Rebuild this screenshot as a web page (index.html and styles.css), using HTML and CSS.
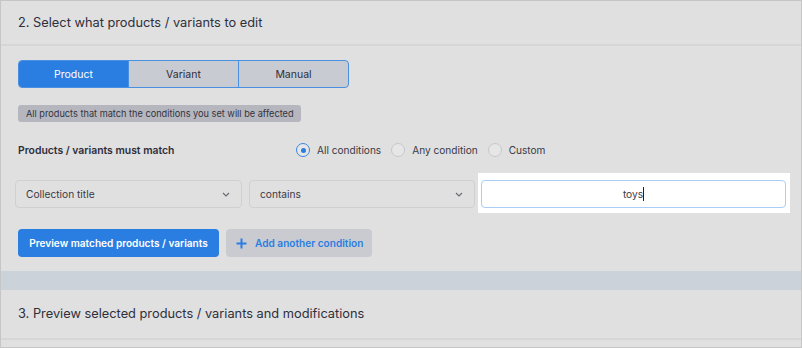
FILE: index.html
```html
<!DOCTYPE html>
<html lang="en">

<head>
  <meta charset="UTF-8">
  <meta name="viewport" content="width=device-width, initial-scale=1.0">
  <title>Bulk edit</title>
  <link rel="stylesheet" href="styles.css">
</head>

<body>
  <div class="panel">
    <div class="section-head">2. Select what products / variants to edit</div>

    <div class="section-body">
      <div class="tabs">
        <div class="tab active">Product</div>
        <div class="tab">Variant</div>
        <div class="tab">Manual</div>
      </div>

      <div class="note">All products that match the conditions you set will be affected</div>

      <div class="match">
        <div class="match-label">Products / variants must match</div>
        <div class="radios">
          <label class="radio checked"><span class="dot"></span>All conditions</label>
          <label class="radio"><span class="dot"></span>Any condition</label>
          <label class="radio"><span class="dot"></span>Custom</label>
        </div>
      </div>

      <div class="condition">
        <div class="select first">
          <span>Collection title</span>
          <svg class="chevron" width="8" height="5" viewBox="0 0 8 5"><path d="M1 1l3 3 3-3" fill="none" stroke="#6b6b73" stroke-width="1.2"/></svg>
        </div>
        <div class="select">
          <span>contains</span>
          <svg class="chevron" width="8" height="5" viewBox="0 0 8 5"><path d="M1 1l3 3 3-3" fill="none" stroke="#6b6b73" stroke-width="1.2"/></svg>
        </div>
        <div class="value-wrap">
          <div class="value">toys<span class="caret"></span></div>
        </div>
      </div>

      <div class="actions">
        <button class="btn primary">Preview matched products / variants</button>
        <button class="btn secondary">
          <svg width="11" height="11" viewBox="0 0 11 11"><path d="M5.5 0.5v10M0.5 5.5h10" stroke="#2a7de1" stroke-width="2"/></svg>
          Add another condition
        </button>
      </div>
    </div>

    <div class="band"></div>

    <div class="section-head tall">3. Preview selected products / variants and modifications</div>
    <div class="rest"></div>
  </div>
</body>

</html>
```

FILE: styles.css
```css
* {
  margin: 0;
  padding: 0;
  box-sizing: border-box;
  font-family: Inter, "Noto Sans", Arial, sans-serif;
}

body {
  background: #e0e0e0;
  color: #2e2e3a;
}

.panel {
  width: 802px;
  height: 348px;
  border: 1px solid #c6c6c6;
  background: #e0e0e0;
}

.section-head {
  height: 45px;
  padding: 0 17px;
  display: flex;
  align-items: center;
  font-size: 12.8px;
  color: #2f2f3b;
  border-bottom: 2px solid #d6d6d6;
}

.section-head.tall {
  height: 50px;
  padding-bottom: 2px;
}

.section-body {
  padding: 14px 17px 14px;
}

.tabs {
  display: flex;
  width: 331px;
  height: 28px;
  border: 1px solid #4a90e2;
  border-radius: 4px;
  overflow: hidden;
  background: #c9cbd2;
}

.tab {
  flex: 1;
  display: flex;
  align-items: center;
  justify-content: center;
  font-size: 10.5px;
  color: #2e2e3a;
  border-left: 1px solid #4a90e2;
}

.tab:first-child {
  border-left: 0;
}

.tab.active {
  background: #2a7de1;
  color: #fff;
}

.note {
  display: inline-block;
  margin-top: 17px;
  height: 17px;
  line-height: 17px;
  padding: 0 7px 0 8px;
  border-radius: 3px;
  background: #b6b7be;
  font-size: 9.2px;
  color: #33333f;
}

.match {
  display: flex;
  align-items: center;
  height: 20px;
  margin-top: 18px;
}

.match-label {
  width: 278px;
  font-size: 10.4px;
  font-weight: 600;
}

.radios {
  display: flex;
  gap: 10px;
}

.radio {
  display: flex;
  align-items: center;
  gap: 7px;
  font-size: 10.1px;
  color: #3a3a46;
}

.dot {
  width: 14px;
  height: 14px;
  border-radius: 50%;
  border: 1px solid #c8c8cc;
  background: #e6e6e6;
  display: flex;
  align-items: center;
  justify-content: center;
}

.radio.checked .dot {
  border-color: #3b86e0;
}

.radio.checked .dot::after {
  content: '';
  width: 5px;
  height: 5px;
  border-radius: 50%;
  background: #2a7de1;
}

.condition {
  display: flex;
  align-items: flex-start;
  margin: 20px 0 0 -3px;
  height: 28px;
}

.select {
  flex-shrink: 0;
  width: 226px;
  height: 28px;
  margin-right: 7px;
  padding: 0 11px 0 10px;
  display: flex;
  align-items: center;
  justify-content: space-between;
  border: 1px solid #d0d0d2;
  border-radius: 4px;
  font-size: 10.2px;
  color: #3a3a46;
}

.select.first {
  width: 227px;
}

.select:nth-child(2) {
  margin-right: 3px;
}

.value-wrap {
  flex-shrink: 0;
  margin-top: -7px;
  padding: 7px 4px 5px 3px;
  background: #fff;
}

.value {
  width: 305px;
  height: 28px;
  border: 1px solid #a9cdf6;
  border-radius: 4px;
  display: flex;
  align-items: center;
  justify-content: center;
  font-size: 10.2px;
  color: #3a3a46;
}

.caret {
  display: inline-block;
  width: 1px;
  height: 14px;
  background: #222;
}

.actions {
  display: flex;
  gap: 7px;
  margin-top: 21px;
}

.btn {
  height: 28px;
  border: 0;
  border-radius: 4px;
  font-size: 10.1px;
  font-weight: 600;
  display: flex;
  align-items: center;
}

.btn.primary {
  width: 201px;
  justify-content: center;
  background: #2a7de1;
  color: #fff;
}

.btn.secondary {
  width: 146px;
  padding-left: 10px;
  gap: 8px;
  background: #c9cbd1;
  color: #2a7de1;
}

.band {
  height: 19px;
  background: #cbd2da;
}

.rest {
  height: 7px;
}
```
